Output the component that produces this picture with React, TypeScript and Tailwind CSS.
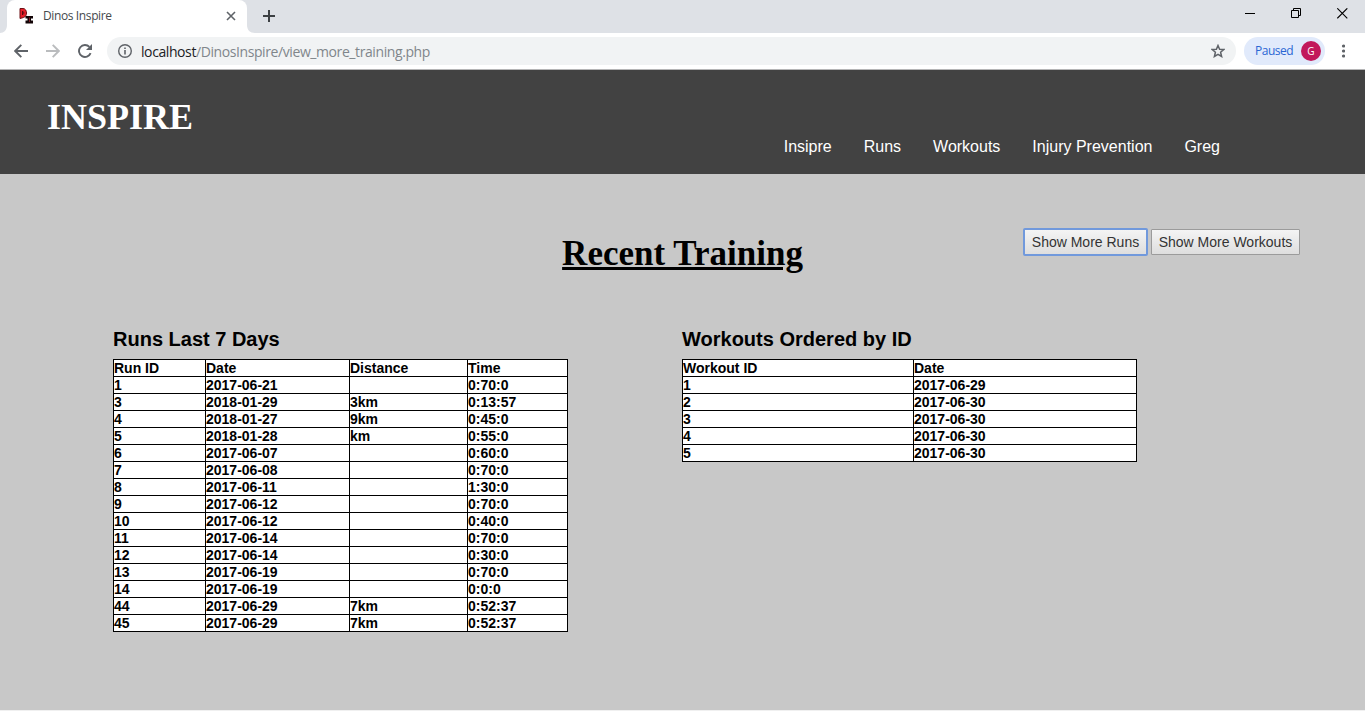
import React from "react";

const runs: string[][] = [
  ["1", "2017-06-21", "", "0:70:0"],
  ["3", "2018-01-29", "3km", "0:13:57"],
  ["4", "2018-01-27", "9km", "0:45:0"],
  ["5", "2018-01-28", "km", "0:55:0"],
  ["6", "2017-06-07", "", "0:60:0"],
  ["7", "2017-06-08", "", "0:70:0"],
  ["8", "2017-06-11", "", "1:30:0"],
  ["9", "2017-06-12", "", "0:70:0"],
  ["10", "2017-06-12", "", "0:40:0"],
  ["11", "2017-06-14", "", "0:70:0"],
  ["12", "2017-06-14", "", "0:30:0"],
  ["13", "2017-06-19", "", "0:70:0"],
  ["14", "2017-06-19", "", "0:0:0"],
  ["44", "2017-06-29", "7km", "0:52:37"],
  ["45", "2017-06-29", "7km", "0:52:37"],
];

const workouts: string[][] = [
  ["1", "2017-06-29"],
  ["2", "2017-06-30"],
  ["3", "2017-06-30"],
  ["4", "2017-06-30"],
  ["5", "2017-06-30"],
];

function DataTable({ head, rows, cols }: { head: string[]; rows: string[][]; cols: string[] }) {
  return (
    <table className="w-[455px] table-fixed border-separate border-spacing-0 border-l border-t border-black bg-white text-left text-[14px] font-bold leading-4">
      <colgroup>
        {cols.map((c, i) => (
          <col key={i} className={c} />
        ))}
      </colgroup>
      <tbody>
        {[head, ...rows].map((row, r) => (
          <tr key={r} className="h-[17px]">
            {row.map((cell, c) => (
              <td key={c} className="h-[17px] whitespace-nowrap border-b border-r border-black p-0">
                {cell}
              </td>
            ))}
          </tr>
        ))}
      </tbody>
    </table>
  );
}

function TabStrip() {
  return (
    <div className="flex h-[33px] bg-[#dee1e6]">
      <svg width="7" height="33" className="shrink-0">
        <path d="M7 25V33H0C4 33 7 30 7 25Z" fill="#fff" />
      </svg>
      <div className="flex h-full w-[240px] items-center rounded-t-[8px] bg-white pb-px pl-3">
        <svg width="16" height="16" viewBox="0 0 16 16" className="shrink-0">
          <path
            d="M1 .5H4C6.500 .5 7.500 3 7.500 5S6.500 9 4.500 9.500L1 10.500Z"
            fill="#e8202a"
            stroke="#6d1015"
            strokeWidth="1"
          />
          <path d="M3.500 3V7M3.500 3.500C5 3.500 5.300 5.500 4 6.500" fill="none" stroke="#5a0c10" strokeWidth="1" />
          <path d="M6.500 8H14V10.500H12V12.500H14V15.500H6.500V12.500H8.500V10.500H6.500Z" fill="#120406" />
          <path d="M10.500 9.500V14" stroke="#7a1a20" />
        </svg>
        <span className="ml-2 w-[183px] font-['Open_Sans',sans-serif] text-[12px] tracking-[-0.38px] text-[#45494d]">
          Dinos Inspire
        </span>
        <svg width="10" height="10" viewBox="0 0 10 10" className="shrink-0">
          <path d="M1 1L9 9M9 1L1 9" stroke="#5f6368" strokeWidth="1.6" />
        </svg>
      </div>
      <svg width="8" height="33" className="shrink-0">
        <path d="M0 25V33H8C3 33 0 30 0 25Z" fill="#fff" />
      </svg>
      <svg width="12" height="12" viewBox="0 0 12 12" className="ml-2 mt-[10px] shrink-0">
        <path d="M6 0V12M0 6H12" stroke="#3c4043" strokeWidth="2" />
      </svg>
      <div className="ml-auto flex pr-[17px] pt-2">
        <svg width="10" height="11" className="mr-[36px]">
          <path d="M0 5.500H10" stroke="#000" />
        </svg>
        <svg width="11" height="11" className="mr-[35px]" fill="none" stroke="#000">
          <path d="M.5 2.500H7.500V9.500H.5ZM2.500 2.500V.5H9.500V7.500H7.500" />
        </svg>
        <svg width="11" height="11">
          <path d="M.3 .3L10.300 10.300M10.300 .3L.3 10.300" stroke="#000" strokeWidth="1.100" />
        </svg>
      </div>
    </div>
  );
}

function Toolbar() {
  return (
    <div className="flex h-[37px] items-center border-b border-[#b5b5b6] bg-white pl-[14px] font-['Open_Sans',sans-serif]">
      <svg width="14" height="14" viewBox="0 0 14 14" fill="none" stroke="#5f6368" strokeWidth="1.900" className="shrink-0">
        <path d="M14 7H1.500M7.300 .8L1.200 7L7.300 13.200" />
      </svg>
      <svg width="14" height="14" viewBox="0 0 14 14" fill="none" stroke="#babcbe" strokeWidth="1.900" className="ml-[18px] shrink-0">
        <path d="M0 7H12.500M6.700 .8L12.800 7L6.700 13.200" />
      </svg>
      <svg width="15" height="14" viewBox="0 0 15 14" fill="none" className="ml-[18px] shrink-0">
        <path d="M12.600 9.200A6 6 0 1 1 11.400 2.900" stroke="#5f6368" strokeWidth="1.900" />
        <path d="M14 0V6H8Z" fill="#5f6368" />
      </svg>
      <div className="ml-[14px] flex h-7 w-[1129px] shrink-0 items-center rounded-full bg-[#f1f3f4] pl-[11px]">
        <svg width="14" height="14" viewBox="0 0 14 14" fill="none" stroke="#5f6368" className="shrink-0">
          <circle cx="7" cy="7" r="6.300" strokeWidth="1.400" />
          <path d="M7 6V10.500M7 3.500V5" strokeWidth="1.600" />
        </svg>
        <span className="ml-[9px] whitespace-nowrap text-[14px] tracking-[-0.41px] text-[#80868b]">
          <span className="text-[#202124]">localhost</span>/DinosInspire/view_more_training.php
        </span>
        <svg width="14" height="14" viewBox="0 0 14 14" fill="none" className="ml-auto mr-[11px] shrink-0">
          <path
            d="M7 1.500L8.600 5.200L12.800 5.500L9.600 8.200L10.600 12.500L7 10.300L3.400 12.500L4.400 8.200L1.200 5.500L5.400 5.200Z"
            stroke="#5f6368"
            strokeWidth="1.500"
          />
        </svg>
      </div>
      <div className="ml-2 flex h-7 w-[81px] shrink-0 items-center rounded-full bg-[#e1eafb] pl-[11px]">
        <span className="w-[46px] text-[12px] tracking-[-0.5px] text-[#2a66d4]">Paused</span>
        <span className="flex size-5 items-center justify-center rounded-full bg-[#c2185b] text-[10px] text-white">G</span>
      </div>
      <svg width="4" height="14" viewBox="0 0 4 14" fill="#5f6368" className="ml-[16px] shrink-0">
        <circle cx="2.500" cy="2" r="1.600" />
        <circle cx="2.500" cy="7" r="1.600" />
        <circle cx="2.500" cy="12" r="1.600" />
      </svg>
    </div>
  );
}

export default function App() {
  return (
    <div className="flex h-[711px] w-[1365px] flex-col overflow-hidden bg-[#f0f0f0] font-['Liberation_Sans',Arial,sans-serif] text-black">
      <TabStrip />
      <Toolbar />
      <header className="flex h-[104px] shrink-0 justify-between bg-[#424242] pl-[47px] pr-[145px] text-white">
        <h1 className="mt-[26px] font-['Liberation_Serif',serif] text-[36px] font-bold leading-[42px]">INSPIRE</h1>
        <nav className="mt-[68px] flex gap-8 text-[16px] leading-[18px]">
          <a>Insipre</a>
          <a>Runs</a>
          <a>Workouts</a>
          <a>Injury Prevention</a>
          <a>Greg</a>
        </nav>
      </header>
      <main className="h-[536px] shrink-0 bg-[#c8c8c8]">
        <div className="grid h-[150px] grid-cols-[1fr_auto_1fr] pt-[54px]">
          <h2 className="col-start-2 mt-[5px] font-['Liberation_Serif',serif] text-[35px] font-bold leading-[42px] underline decoration-[3px]">
            Recent Training
          </h2>
          <div className="flex items-start justify-end gap-[3px] pr-[65px] text-[14px] text-[#333]">
            <button className="h-[28px] w-[125px] rounded-[2px] border-2 border-[#7199dc] bg-linear-to-b from-[#f4f4f4] to-[#dedede]">
              Show More Runs
            </button>
            <button className="mt-px h-[26px] w-[149px] rounded-[1px] border border-[#9b9b9b] bg-linear-to-b from-[#f4f4f4] to-[#dedede]">
              Show More Workouts
            </button>
          </div>
        </div>
        <div className="flex gap-[114px] pl-[113px]">
          <section>
            <h3 className="mb-[7px] mt-[3px] text-[20px] font-bold leading-[25px]">Runs Last 7 Days</h3>
            <DataTable
              head={["Run ID", "Date", "Distance", "Time"]}
              rows={runs}
              cols={["w-[92px]", "w-[144px]", "w-[118px]", "w-[100px]"]}
            />
          </section>
          <section>
            <h3 className="mb-[7px] mt-[3px] text-[20px] font-bold leading-[25px]">Workouts Ordered by ID</h3>
            <DataTable head={["Workout ID", "Date"]} rows={workouts} cols={["w-[231px]", "w-[223px]"]} />
          </section>
        </div>
      </main>
    </div>
  );
}
